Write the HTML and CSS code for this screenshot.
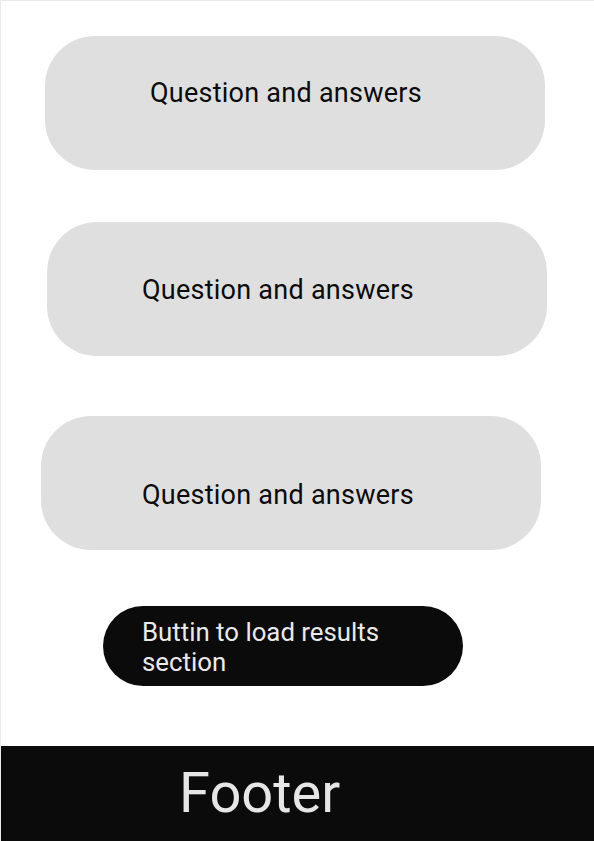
FILE: index.html
```html
<!DOCTYPE html>
<html lang="en">
<head>
<meta charset="utf-8">
<title>Quiz</title>
<link rel="stylesheet" href="styles.css">
</head>
<body>
<div class="page">
  <main class="content">
    <section class="card card--one">Question and answers</section>
    <section class="card card--two">Question and answers</section>
    <section class="card card--three">Question and answers</section>
    <button class="load-btn" type="button">Buttin to load results<br>section</button>
  </main>
  <footer class="footer">Footer</footer>
</div>
</body>
</html>
```

FILE: styles.css
```css
html, body {
  margin: 0;
  padding: 0;
  background: #ffffff;
}

.page {
  box-sizing: border-box;
  width: 594px;
  height: 841px;
  border-top: 1px solid rgba(200, 200, 200, 0.4);
  border-left: 1px solid rgba(200, 200, 200, 0.4);
  display: flex;
  flex-direction: column;
  font-family: Roboto, "Noto Sans", sans-serif;
}

.content {
  flex: 1;
  display: flex;
  flex-direction: column;
  align-items: flex-start;
  padding-top: 35px;
}

.card {
  box-sizing: border-box;
  width: 500px;
  height: 134px;
  border-radius: 50px;
  background: #dfdfdf;
  color: #0b0b0b;
  font-size: 27px;
  letter-spacing: 0.25px;
  line-height: 30px;
}

.card--one {
  margin-left: 44px;
  padding: 42px 0 0 105px;
}

.card--two {
  margin-left: 46px;
  margin-top: 52px;
  padding: 53px 0 0 95px;
}

.card--three {
  margin-left: 40px;
  margin-top: 60px;
  padding: 64px 0 0 101px;
}

.load-btn {
  box-sizing: border-box;
  margin: 56px 0 0 102px;
  width: 360px;
  height: 80px;
  border: none;
  border-radius: 40px;
  background: #0b0b0b;
  color: #eaeaea;
  font-family: Roboto, "Noto Sans", sans-serif;
  font-size: 25.8px;
  line-height: 30px;
  text-align: left;
  padding: 2px 0 0 39px;
  display: block;
}

.footer {
  box-sizing: border-box;
  height: 95px;
  background: #0b0b0b;
  color: #e6e6e6;
  font-size: 56px;
  line-height: 95px;
  padding-left: 178px;
}
```
